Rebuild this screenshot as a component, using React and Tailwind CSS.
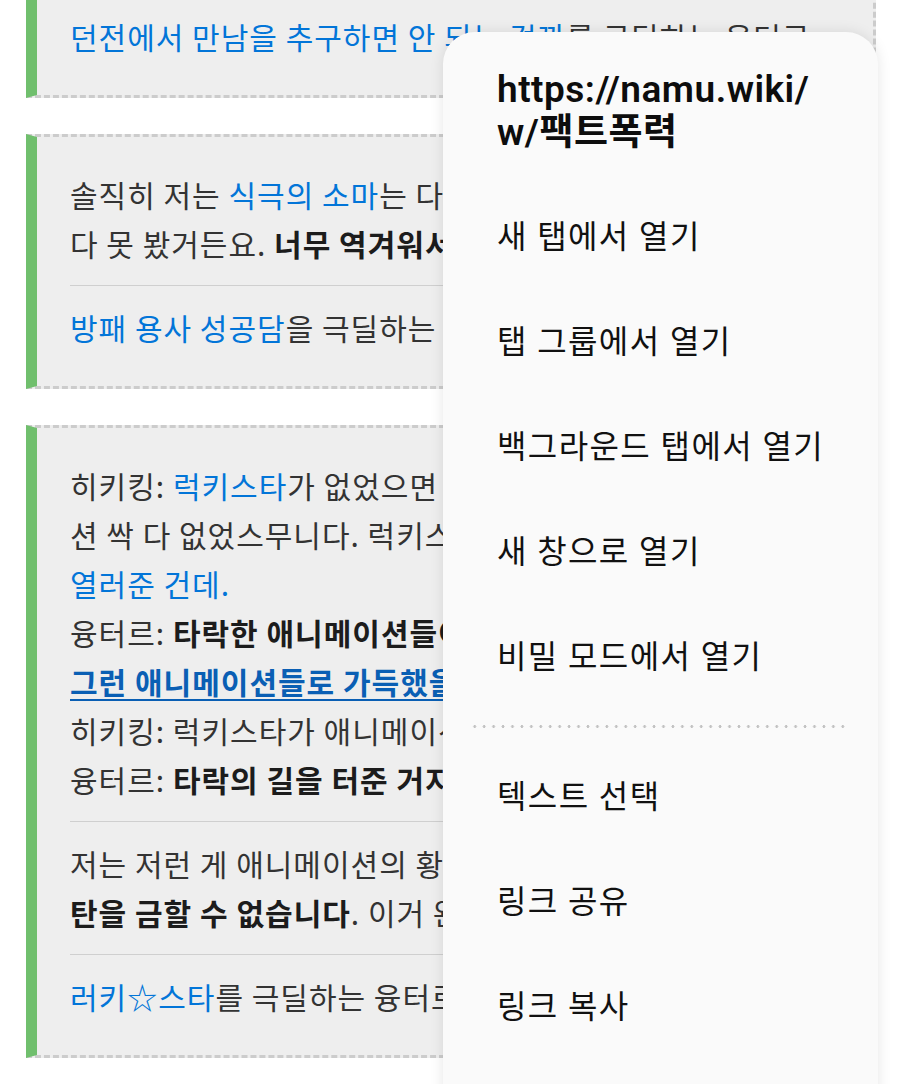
import React from "react";

const L = ({ children }) => <span className="text-[#0275d8]">{children}</span>;
const B = ({ children }) => <b className="font-bold text-[#1c1c1c]">{children}</b>;

function Line({ children }) {
  return <div className="whitespace-nowrap">{children}</div>;
}

function Divider() {
  return <div className="my-[17px] h-px bg-[#cfcfcf]" />;
}

function Card({ children, first }) {
  return (
    <div
      className={
        (first ? "-mt-[24px] " : "") +
        "ml-[26px] mr-[24px] overflow-hidden border-[3px] border-dashed border-[#cccccc] border-l-[11px] border-l-[#70bf6d] [border-left-style:solid] bg-[#eeeeee] pl-[33px] pr-[34px] pt-[33px] pb-[34px] text-[30px] leading-[49px] tracking-[1px] text-[#333333]"
      }
    >
      {children}
    </div>
  );
}

const items1 = ["새 탭에서 열기", "탭 그룹에서 열기", "백그라운드 탭에서 열기", "새 창으로 열기", "비밀 모드에서 열기"];
const items2 = ["텍스트 선택", "링크 공유", "링크 복사"];

export default function App() {
  return (
    <div
      className="relative h-[1084px] w-[900px] overflow-hidden bg-white"
      style={{ fontFamily: "'Noto Sans CJK KR', 'Noto Sans', sans-serif" }}
    >
      <div className="flex flex-col gap-[36px]">
        <Card first>
          <Line>
            <L>던전에서 만남을 추구하면 안 되는 걸까</L>를 극딜하는 융터르
          </Line>
        </Card>
        <Card>
          <Line>
            솔직히 저는 <L>식극의 소마</L>는 다른 건 몰라도 그 장면들은
          </Line>
          <Line>
            다 못 봤거든요. <B>너무 역겨워서요.</B>
          </Line>
          <Divider />
          <Line>
            <L>방패 용사 성공담</L>을 극딜하는 융터르.
          </Line>
        </Card>
        <Card>
          <Line>
            히키킹: <L>럭키스타</L>가 없었으면 지금 같은 그런 애니메이
          </Line>
          <Line>
            션 싹 다 없었스무니다. 럭키스타가 <L>그런 애니메이션의 길을</L>
          </Line>
          <Line>
            <L>열러준 건데.</L>
          </Line>
          <Line>
            융터르: <B>타락한 애니메이션들이 판치는 지금의 업계가</B>
          </Line>
          <Line>
            <span className="font-bold text-[#0a5fb4] underline decoration-2 underline-offset-[5px]">
              그런 애니메이션들로 가득했을 거라는 말씀이시죠?
            </span>
          </Line>
          <Line>히키킹: 럭키스타가 애니메이션 업계의 새 길을 연 거죠.</Line>
          <Line>
            융터르: <B>타락의 길을 터준 거지요.</B>
          </Line>
          <Divider />
          <Line>저는 저런 게 애니메이션의 황금기라고 하니 한</Line>
          <Line>
            <B>탄을 금할 수 없습니다</B>. 이거 완전 팩트폭력이네요.
          </Line>
          <Divider />
          <Line>
            <L>러키☆스타</L>를 극딜하는 융터르.
          </Line>
        </Card>
      </div>

      <div
        className="absolute left-[443px] top-[32px] h-[1100px] w-[435px] rounded-[32px] bg-[#fafafa] pt-[36px] shadow-[0_0_14px_rgba(0,0,0,0.10)]"
        style={{ fontFamily: "Roboto, 'Noto Sans CJK KR', sans-serif" }}
      >
        <div className="pl-[54px] pr-[20px] text-[37px] font-semibold leading-[43px] tracking-[0.5px] text-[#0d0d0d]">
          <div>https://namu.wiki/</div>
          <div>w/팩트폭력</div>
        </div>
        <div className="mt-[30px]">
          {items1.map((t) => (
            <div key={t} className="flex h-[105px] items-center pl-[54px] text-[32px] tracking-[1.4px] text-[#111111]">
              {t}
            </div>
          ))}
        </div>
        <div className="flex h-[35px] items-center pl-[27px] pr-[30px]">
          <div className="h-[3px] w-full bg-[radial-gradient(circle,#c2c2c2_1.2px,transparent_1.7px)] bg-[length:9.45px_3px] bg-repeat-x" />
        </div>
        <div>
          {items2.map((t) => (
            <div key={t} className="flex h-[105px] items-center pl-[54px] text-[32px] tracking-[1.4px] text-[#111111]">
              {t}
            </div>
          ))}
        </div>
      </div>
    </div>
  );
}
